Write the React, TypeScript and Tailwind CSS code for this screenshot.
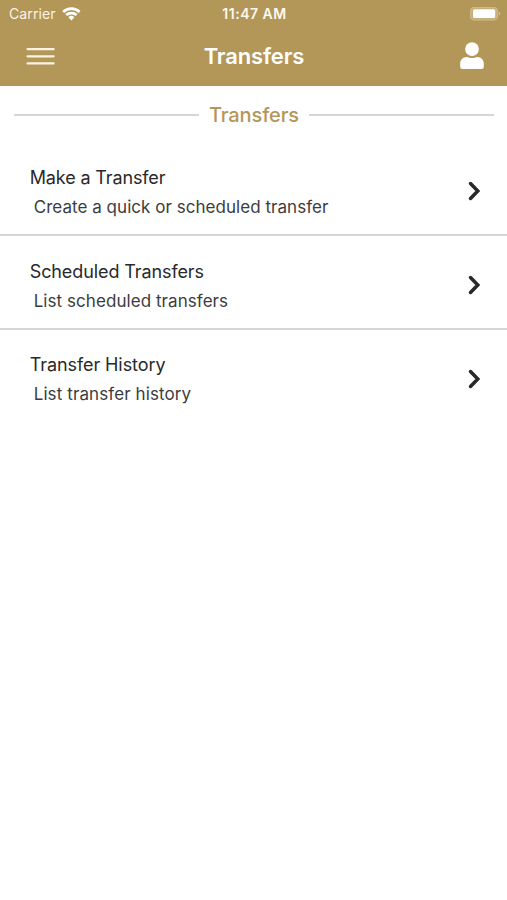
const items = [
  { title: 'Make a Transfer', detail: 'Create a quick or scheduled transfer', titleSpacing: 'tracking-[-0.13px]', detailSpacing: 'tracking-[0.04px]' },
  { title: 'Scheduled Transfers', detail: 'List scheduled transfers', titleSpacing: 'tracking-[-0.1px]', detailSpacing: 'tracking-[0.06px]' },
  { title: 'Transfer History', detail: 'List transfer history', titleSpacing: 'tracking-[-0.08px]', detailSpacing: 'tracking-[0.1px]' },
];

function WifiIcon() {
  return (
    <svg width="20" height="14" viewBox="0 0 20 14" fill="none" stroke="white" strokeWidth="2.7">
      <path d="M1.2 4.9A12 12 0 0 1 17.6 4.9" />
      <path d="M4.2 8.1A7.6 7.6 0 0 1 14.600 8.1" />
      <path d="M6.4 10.2A4.3 4.3 0 0 1 12.4 10.2L9.4 13.4Z" fill="white" stroke="none" />
    </svg>
  );
}

function BatteryIcon() {
  return (
    <svg width="31" height="14" viewBox="0 0 31 14">
      <rect x="0.6" y="0.4" width="26.8" height="12.6" rx="3.8" fill="#c6ae7b" stroke="#cfba8c" strokeWidth="1.2" />
      <rect x="3" y="2.2" width="22.2" height="8.8" rx="1.6" fill="white" />
      <path d="M28.8 4.6v4.2c1.7-.8 1.7-3.4 0-4.2Z" fill="#d6c59f" />
    </svg>
  );
}

function MenuIcon() {
  return (
    <svg width="29" height="18" viewBox="0 0 29 18" stroke="#fbf3e4" strokeWidth="2.3" strokeLinecap="round">
      <path d="M1.6 2.2H27.6M1.6 9.3H27.6M1.6 16.4H27.6" />
    </svg>
  );
}

function PersonIcon() {
  return (
    <svg width="24" height="28" viewBox="0 0 24 28" fill="white">
      <circle cx="12" cy="7.1" r="6.9" />
      <path d="M7 15c1.6.5 3.1.9 5 .9s3.4-.4 5-.9c4.2 0 6.8 2.8 6.8 6.8v3a2.2 2.2 0 0 1-2.2 2.2H2.4A2.2 2.2 0 0 1 .2 24.800v-3c0-4 2.600-6.800 6.800-6.800Z" />
    </svg>
  );
}

function ChevronIcon() {
  return (
    <svg width="13" height="20" viewBox="0 0 13 20" fill="none" stroke="#29292b" strokeWidth="3.5" strokeLinecap="round" strokeLinejoin="miter">
      <path d="M2.5 2.5L9.8 10L2.5 17.5" />
    </svg>
  );
}

export default function App() {
  return (
    <div className="flex h-[900px] w-[507px] flex-col overflow-hidden bg-white font-['Inter','Liberation_Sans',sans-serif] text-[#29292b]">
      <header className="h-[86.3px] shrink-0 bg-[#b39759] text-white">
        <div className="grid h-[27px] grid-cols-3 items-center pr-[6px] pl-[9px]">
          <div className="flex items-center gap-[6px]">
            <span className="text-[14px] leading-[20px] tracking-[0.1px] text-[#fbf3e4]">Carrier</span>
            <WifiIcon />
          </div>
          <span className="pr-[1px] text-center text-[14px] leading-[20px] font-semibold tracking-[0.5px] whitespace-nowrap text-[#fdf8ee]">11:47 AM</span>
          <div className="flex justify-end">
            <BatteryIcon />
          </div>
        </div>
        <div className="grid h-[58px] grid-cols-3 items-center pr-[23px] pl-[26px]">
          <button aria-label="Menu" className="justify-self-start">
            <MenuIcon />
          </button>
          <h1 className="pr-[2px] text-center text-[22px] leading-[28px] font-semibold tracking-[-0.15px]">Transfers</h1>
          <button aria-label="Profile" className="justify-self-end">
            <PersonIcon />
          </button>
        </div>
      </header>

      <div className="flex h-[55.7px] shrink-0 items-center gap-[10px] pt-[2px] pr-[13px] pl-[14px]">
        <div className="h-[2px] flex-1 bg-[#d6d6d8]" />
        <h2 className="text-[20px] leading-[28px] font-medium tracking-[-0.12px] text-[#b39759]">Transfers</h2>
        <div className="h-[2px] flex-1 bg-[#d6d6d8]" />
      </div>

      <main className="flex flex-col">
        {items.map((item) => (
          <a
            key={item.title}
            className="flex h-[93.8px] items-center justify-between border-b-2 border-[#d6d6d8] pt-[7px] pr-[26.5px] pl-[29.7px] last:border-transparent"
          >
            <div className="pt-[2px]">
              <div className={'text-[18px] leading-[30px] ' + item.titleSpacing}>{item.title}</div>
              <div className={'pl-[4px] text-[17px] leading-[29px] text-[#3c3c3e] ' + item.detailSpacing}>{item.detail}</div>
            </div>
            <ChevronIcon />
          </a>
        ))}
      </main>
    </div>
  );
}
